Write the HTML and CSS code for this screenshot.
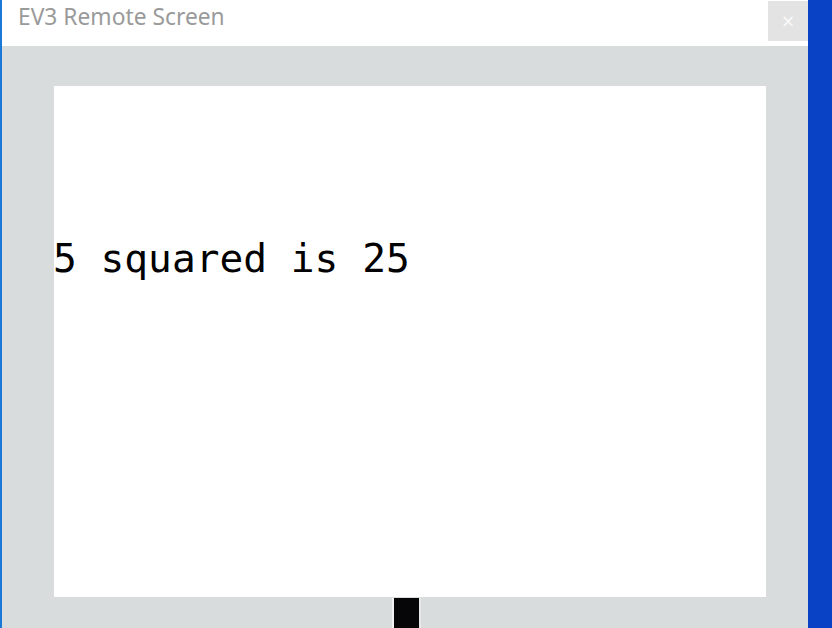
FILE: index.html
```html
<!DOCTYPE html>
<html>
<head>
<meta charset="utf-8">
<title>EV3 Remote Screen</title>
<link rel="stylesheet" href="styles.css">
</head>
<body>
<div class="desk">
  <div class="edge"></div>
  <div class="window">
    <div class="titlebar">
      <span class="title">EV3 Remote Screen</span>
      <button class="close">×</button>
    </div>
    <div class="content">
      <div class="screen">
        <div class="line">5 squared is 25</div>
      </div>
      <div class="stand"></div>
    </div>
  </div>
  <div class="backdrop"></div>
</div>
</body>
</html>
```
FILE: styles.css
```css
html, body {
  margin: 0;
  padding: 0;
  width: 832px;
  height: 628px;
  overflow: hidden;
}
.desk {
  display: flex;
  width: 832px;
  height: 628px;
}
.edge {
  width: 2px;
  background: #1b78d6;
}
.window {
  width: 806px;
  display: flex;
  flex-direction: column;
}
.titlebar {
  height: 46px;
  flex: 0 0 46px;
  background: #ffffff;
  display: flex;
  align-items: flex-start;
  justify-content: space-between;
}
.title {
  font-family: "Noto Sans", sans-serif;
  font-size: 22.8px;
  color: #9a9a9a;
  margin-left: 16px;
  margin-top: 2px;
  line-height: 30px;
}
.close {
  width: 40px;
  height: 40px;
  margin-top: 1px;
  border: none;
  padding: 0;
  background: #e3e3e3;
  color: #fafafa;
  font-family: "DejaVu Sans", sans-serif;
  font-size: 17px;
  line-height: 40px;
}
.content {
  flex: 1;
  background: #d9dcdc;
  padding: 40px 0 0 52px;
  display: flex;
  flex-direction: column;
}
.screen {
  width: 712px;
  height: 511px;
  flex: 0 0 511px;
  background: #ffffff;
  padding-top: 151px;
  box-sizing: border-box;
}
.line {
  font-family: "DejaVu Sans Mono", monospace;
  font-size: 39.5px;
  line-height: 42px;
  color: #000;
  white-space: pre;
  margin-left: -1px;
}
.stand {
  width: 25px;
  height: 31px;
  margin-top: 1px;
  margin-left: 338px;
  background: #060608;
  border-left: 2px solid #f2f2f2;
  border-right: 2px solid #e8e8e8;
}
.backdrop {
  flex: 1;
  background: #0a42c6;
}
```
